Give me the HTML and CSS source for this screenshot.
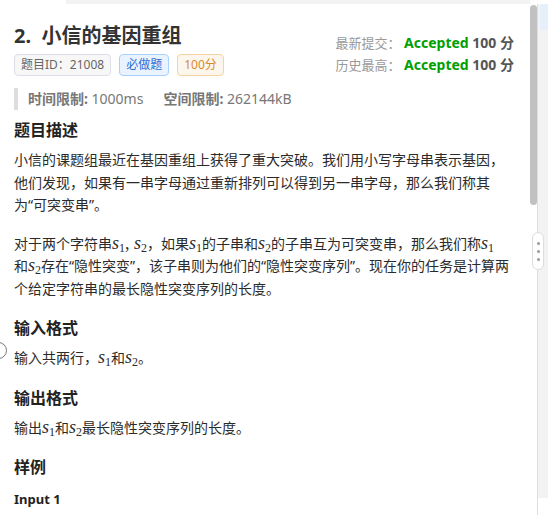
FILE: index.html
```html
<!DOCTYPE html>
<html lang="zh-CN">
  <head>
    <meta charset="UTF-8" />
    <meta name="viewport" content="width=device-width, initial-scale=1" />
    <title>2. 小信的基因重组</title>
    <link rel="stylesheet" href="styles.css">
  </head>
  <body>
    <div class="layout">
      <div class="main">
        <div class="topbar"></div>

        <div class="pane">
          <div class="scroller">
            <div class="problem">
              <div class="head">
                <div class="head-left">
                  <h1 class="title">2.&nbsp; 小信的基因重组</h1>
                  <div class="tags">
                    <span class="tag tag-info">题目ID：21008</span>
                    <span class="tag tag-primary">必做题</span>
                    <span class="tag tag-warning">100分</span>
                  </div>
                </div>
                <div class="status">
                  <div class="status-row">
                    <span class="status-label">最新提交：</span>
                    <span class="ac">Accepted</span>
                    <span class="score">100 分</span>
                  </div>
                  <div class="status-row">
                    <span class="status-label">历史最高：</span>
                    <span class="ac">Accepted</span>
                    <span class="score">100 分</span>
                  </div>
                </div>
              </div>

              <div class="limits">
                <span class="limit"><b>时间限制:</b> 1000ms</span>
                <span class="limit"><b>空间限制:</b> 262144kB</span>
              </div>

              <h3>题目描述</h3>
              <p>小信的课题组最近在基因重组上获得了重大突破。我们用小写字母串表示基因，<br>他们发现，如果有一串字母通过重新排列可以得到另一串字母，那么我们称其<br>为“可突变串”。</p>
              <p>对于两个字符串<span class="math"><i>s</i><sub>1</sub>, <i>s</i><sub>2</sub></span>，如果<span class="math"><i>s</i><sub>1</sub></span>的子串和<span class="math"><i>s</i><sub>2</sub></span>的子串互为可突变串，那么我们称<span class="math"><i>s</i><sub>1</sub></span><br>和<span class="math"><i>s</i><sub>2</sub></span>存在“隐性突变”，该子串则为他们的“隐性突变序列”。现在你的任务是计算两<br>个给定字符串的最长隐性突变序列的长度。</p>

              <h3>输入格式</h3>
              <p>输入共两行，<span class="math"><i>s</i><sub>1</sub></span>和<span class="math"><i>s</i><sub>2</sub></span>。</p>

              <h3>输出格式</h3>
              <p>输出<span class="math"><i>s</i><sub>1</sub></span>和<span class="math"><i>s</i><sub>2</sub></span>最长隐性突变序列的长度。</p>

              <h3>样例</h3>
              <h4>Input 1</h4>
              <pre class="sample">aabcd
bcdaa</pre>
              <h4>Output 1</h4>
              <pre class="sample">5</pre>

              <h3>数据范围</h3>
              <p>对于 100% 的数据，字符串长度不超过 5000。</p>
            </div>
          </div>

          <!-- 自绘滚动条 -->
          <div class="vscroll"><div class="vscroll-thumb"></div></div>
        </div>
      </div>

      <div class="side">
        <div class="side-tab"></div>
        <div class="side-foot"></div>
      </div>

      <!-- 拖动条把手 -->
      <div class="handle"><i></i><i></i><i></i></div>
      <div class="edge-circle"></div>
    </div>
  </body>
</html>
```

FILE: styles.css
```css
* {
  box-sizing: border-box;
}

body {
  margin: 0;
  background-color: #fff;
  color: #2b2b2b;
  font-family: "Noto Sans", "Noto Sans CJK SC", sans-serif;
  font-size: 14px;
  overflow: hidden;
}

.layout {
  position: relative;
  display: flex;
  height: 515px;
}

.main {
  width: 537px;
  display: flex;
  flex-direction: column;
}

.topbar {
  height: 4px;
  margin-left: 66px;
  margin-right: 7px;
  background-color: #f2f2f2;
}

.pane {
  flex: 1;
  display: flex;
  min-height: 0;
}

.scroller {
  flex: 1;
  overflow: hidden;
}

.vscroll {
  width: 7px;
  padding-top: 1px;
}

.vscroll-thumb {
  height: 200px;
  background-color: #c1c1c1;
  border-radius: 4px;
}

.problem {
  padding: 18px 10px 40px 14px;
}

/* 标题和状态 */
.head {
  display: flex;
  justify-content: space-between;
  align-items: flex-start;
}

.title {
  margin: 0 0 4px 0;
  font-size: 20px;
  line-height: 28px;
  font-weight: bold;
  color: #333;
}

.tags {
  display: flex;
  gap: 8px;
}

.tag {
  display: inline-block;
  height: 22px;
  line-height: 20px;
  padding: 0 6px;
  font-size: 12px;
  border: 1px solid;
  border-radius: 4px;
}

.tag-info {
  background-color: #f7f7f8;
  border-color: #dcdfe6;
  color: #666;
}

.tag-primary {
  background-color: #e8f3ff;
  border-color: #a9d1ff;
  color: #2b6fd6;
}

.tag-warning {
  background-color: #fdf6ec;
  border-color: #f5d3a3;
  color: #d98a2b;
}

.status {
  margin-top: 10px;
  margin-right: 6px;
}

.status-row {
  line-height: 22px;
  text-align: right;
}

.status-label {
  color: #999;
  font-size: 13px;
}

.ac {
  color: #00a000;
  font-weight: bold;
}

.score {
  color: #555;
  font-weight: bold;
}

.limits {
  margin-top: 12px;
  border-left: 4px solid #ddd;
  padding-left: 10px;
  line-height: 22px;
  color: #777;
  display: flex;
  gap: 20px;
}

.limit b {
  color: #777;
}

/* 题面 */
h3 {
  margin: 8px 0 7px 0;
  font-size: 16px;
  line-height: 24px;
  font-weight: bold;
  color: #222;
}

p {
  margin: 0 0 16px 0;
  line-height: 22.5px;
}

h4 {
  margin: 10px 0 12px 0;
  font-size: 13px;
  line-height: 20px;
  font-weight: bold;
  color: #222;
}

.math {
  font-family: "Liberation Serif", serif;
  font-size: 18px;
  line-height: 1;
  white-space: nowrap;
}

.math sub {
  font-style: normal;
  font-size: 12px;
  vertical-align: -3px;
  line-height: 1;
}

.sample {
  margin: 0 0 12px 0;
  padding: 8px 10px;
  background-color: #f5f5f5;
  border: 1px solid #e5e5e5;
  border-radius: 4px;
  font-family: "Liberation Mono", monospace;
  font-size: 13px;
  line-height: 20px;
}

/* 右侧面板 */
.side {
  flex: 1;
  border-left: 1px solid #ddd;
  background-color: #f3f3f3;
  margin-top: 4px;
  display: flex;
  flex-direction: column;
  justify-content: space-between;
}

.side-tab {
  height: 26px;
  margin-left: 2px;
  background-color: #e6f0fb;
}

.side-foot {
  height: 17px;
  background-color: #fff;
}

.handle {
  position: absolute;
  left: 532px;
  top: 232px;
  width: 12px;
  height: 38px;
  background-color: #fff;
  border: 1px solid #ddd;
  border-radius: 6px;
  display: flex;
  flex-direction: column;
  align-items: center;
  justify-content: center;
  gap: 5px;
}

.handle i {
  width: 3px;
  height: 3px;
  border-radius: 50%;
  background-color: #999;
}

.edge-circle {
  position: absolute;
  left: -10px;
  top: 342px;
  width: 17px;
  height: 17px;
  border: 1px solid #777;
  border-radius: 50%;
  background-color: #fff;
}
```
